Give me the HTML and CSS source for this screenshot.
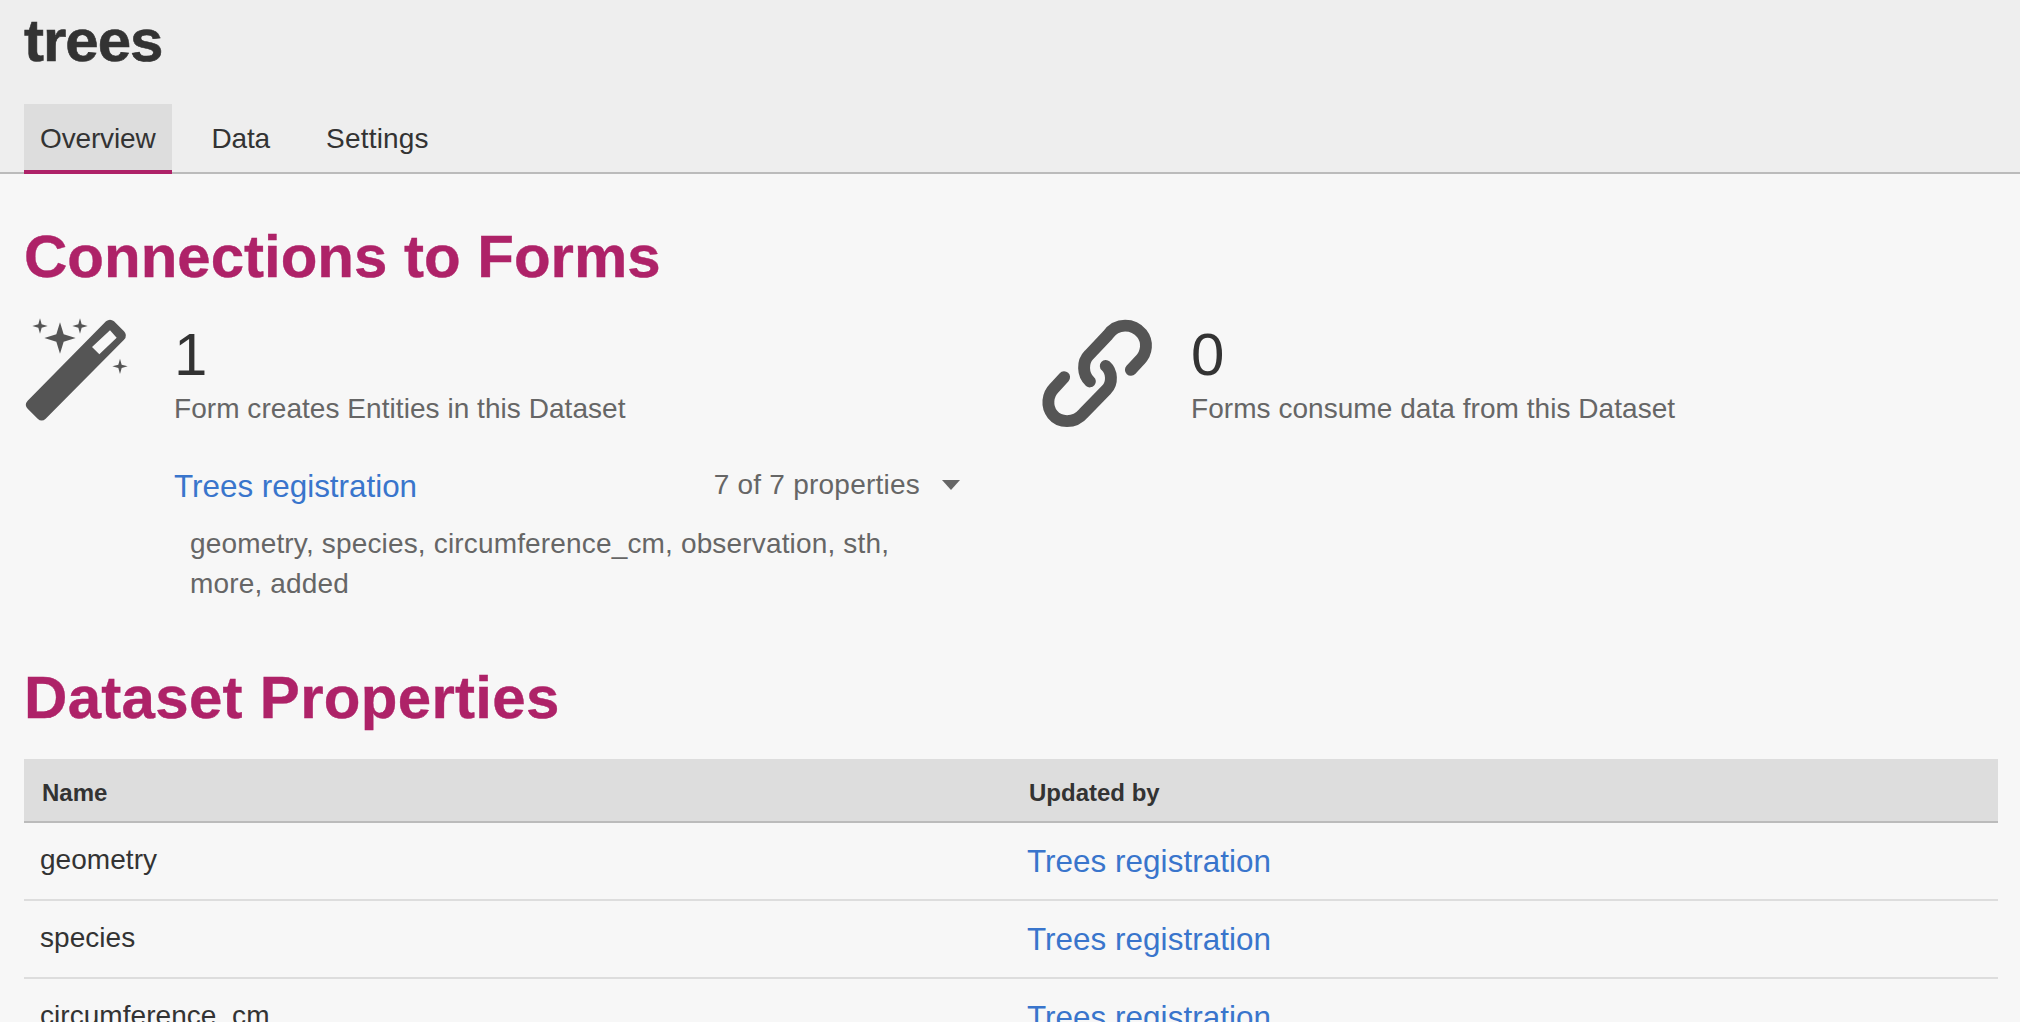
FILE: index.html
```html
<!DOCTYPE html>
<html lang="en">
<head>
<meta charset="utf-8">
<title>trees</title>
<link rel="stylesheet" href="styles.css">
</head>
<body>
<header class="page-head">
  <h1 class="title">trees</h1>
  <nav class="tabs">
    <a class="tab active">Overview</a>
    <a class="tab">Data</a>
    <a class="tab tab-wide">Settings</a>
  </nav>
</header>
<main class="content">
  <h2 class="section-title first">Connections to Forms</h2>
  <div class="connections">
    <section class="conn">
      <div class="conn-icon">
        <svg class="wand" viewBox="72 50 312 318" aria-hidden="true">
          <path fill-rule="evenodd" d="M318 63 Q330 53 342 63 L372 93 Q384 106 372 118 L137 355 Q125 366 113 355 L83 325 Q72 313 83 301 Z M330 90 L276 140 L298 162 L350 112 Z"/>
          <path d="M180 66 L191 102 L227 113 L191 124 L180 160 L169 124 L133 113 L169 102 Z"/>
          <path d="M120 54 L125 72 L143 77 L125 82 L120 100 L115 82 L97 77 L115 72 Z"/>
          <path d="M240 54 L245 72 L263 77 L245 82 L240 100 L235 82 L217 77 L235 72 Z"/>
          <path d="M360 175 L365 193 L383 198 L365 203 L360 221 L355 203 L337 198 L355 193 Z"/>
        </svg>
      </div>
      <div class="conn-body">
        <div class="count">1</div>
        <p class="caption">Form creates Entities in this Dataset</p>
        <div class="form-row">
          <a class="link form-link">Trees registration</a>
          <span class="prop-toggle">7 of 7 properties<span class="caret"></span></span>
        </div>
        <p class="prop-list">geometry, species, circumference_cm, observation, sth, more, added</p>
      </div>
    </section>
    <section class="conn">
      <div class="conn-icon">
        <svg class="chain" viewBox="60 50 342 342" aria-hidden="true">
          <path d="M208 245 C185 225 185 185 205 165 L262 105 C290 65 340 70 365 100 C385 125 380 160 360 180 L332 210"/>
          <path d="M256 198 C275 215 278 250 258 270 L190 340 C160 375 115 370 95 345 C75 320 80 285 100 265 L130 232"/>
        </svg>
      </div>
      <div class="conn-body">
        <div class="count">0</div>
        <p class="caption">Forms consume data from this Dataset</p>
      </div>
    </section>
  </div>
  <h2 class="section-title wide">Dataset Properties</h2>
  <table class="props">
    <thead>
      <tr><th>Name</th><th>Updated by</th></tr>
    </thead>
    <tbody>
      <tr><td class="name">geometry</td><td class="source"><a class="link">Trees registration</a></td></tr>
      <tr><td class="name">species</td><td class="source"><a class="link">Trees registration</a></td></tr>
      <tr><td class="name">circumference_cm</td><td class="source"><a class="link">Trees registration</a></td></tr>
    </tbody>
  </table>
</main>
</body>
</html>
```
FILE: styles.css
```css
* { box-sizing: border-box; }
html, body { height: 100%; overflow: hidden; }
body {
  margin: 0;
  background: #f7f7f7;
  color: #333;
  font-family: "Liberation Sans", Arial, sans-serif;
}
.page-head {
  background: #eee;
  border-bottom: 2px solid #bbb;
  height: 174px;
  padding: 0 24px;
}
.title {
  margin: 0;
  height: 104px;
  font-size: 60px;
  line-height: 82px;
  font-weight: 700;
  letter-spacing: -1px;
  -webkit-text-stroke: 0.6px #333;
}
.tabs { display: flex; gap: 24px; height: 70px; }
.tab {
  display: block;
  height: 70px;
  padding: 0 16px;
  font-size: 28px;
  line-height: 70px;
  letter-spacing: -0.15px;
  color: #333;
}
.tab.tab-wide { letter-spacing: 0.2px; }
.tab.active {
  background: #ddd;
  border-bottom: 4px solid #ae2268;
}
.content { padding: 0 22px 0 24px; }
.section-title {
  margin: 0;
  color: #ae2268;
  font-size: 60px;
  line-height: 70px;
  font-weight: 700;
  -webkit-text-stroke: 0.4px #ae2268;
}
.section-title.first { padding-top: 48px; }
.section-title.wide { letter-spacing: 0.3px; }
.connections {
  display: grid;
  grid-template-columns: 1017px 1fr;
  margin-top: 25px;
  height: 346px;
}
.conn { display: flex; }
.conn-icon { width: 150px; flex: none; }
.wand { display: block; width: 104px; height: 106px; fill: #555; }
.chain {
  display: block;
  width: 113px;
  height: 113px;
  fill: none;
  stroke: #555;
  stroke-width: 36;
  stroke-linecap: round;
}
.conn-body { width: 786px; padding-top: 4px; }
.count { font-size: 60px; line-height: 68px; color: #333; }
.caption { margin: 0; font-size: 28px; line-height: 40px; color: #666; letter-spacing: 0.05px; }
.form-row {
  display: flex;
  justify-content: space-between;
  align-items: flex-start;
  margin-top: 38px;
}
.link { color: #3975cc; font-size: 31.4px; line-height: 40px; }
.prop-toggle {
  display: flex;
  align-items: center;
  font-size: 28px;
  line-height: 36px;
  color: #666;
  letter-spacing: 0.23px;
}
.caret {
  width: 0;
  height: 0;
  margin-left: 22px;
  border-left: 9px solid transparent;
  border-right: 9px solid transparent;
  border-top: 10px solid #666;
}
.prop-list {
  width: 770px;
  margin: 17px 0 0;
  padding-left: 16px;
  font-size: 28px;
  line-height: 40px;
  color: #666;
  letter-spacing: 0.16px;
}
.props { width: 100%; border-collapse: collapse; table-layout: fixed; margin-top: 26px; }
.props th {
  height: 63px;
  padding: 6px 18px 0;
  background: #ddd;
  border-bottom: 2px solid #bbb;
  font-size: 24px;
  font-weight: 700;
  text-align: left;
}
.props td {
  height: 78px;
  padding: 0 16px;
  border-bottom: 2px solid #ddd;
  font-size: 28px;
  letter-spacing: 0.05px;
}
.props td.name { padding-bottom: 3px; }
.props td.source { padding-top: 2px; }
```
